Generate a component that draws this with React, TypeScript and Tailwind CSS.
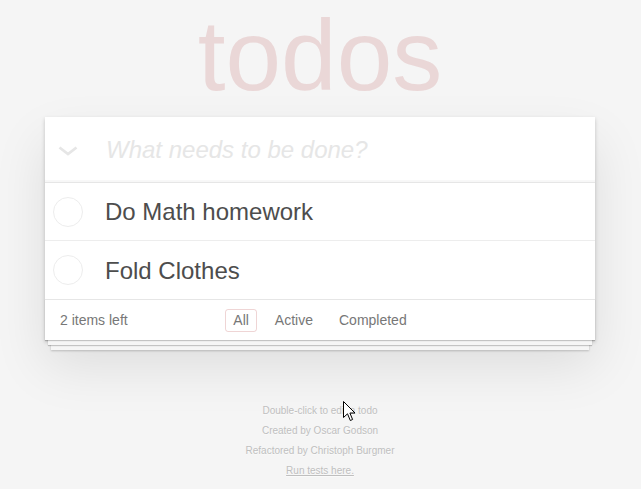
import { type FC } from "react";

const todos = [
  { id: 1, title: "Do Math homework" },
  { id: 2, title: "Fold Clothes" },
];

const Chevron: FC = () => (
  <svg width="20" height="10" viewBox="0 0 20 10" fill="none">
    <path d="M1.5 1.5 L10 8 L18.5 1.5" stroke="#e6e6e6" strokeWidth="2.8" />
  </svg>
);

const Cursor: FC = () => (
  <svg width="13" height="21" viewBox="0 0 13 21">
    <path
      d="M0.5 0.5 L0.5 16.5 L4.5 12.8 L7.3 19.5 L9.6 18.5 L6.9 12 L12 12 Z"
      fill="#fff"
      stroke="#000"
      strokeWidth="1"
      strokeLinejoin="miter"
    />
  </svg>
);

const TodoItem: FC<{ title: string }> = ({ title }) => (
  <li className="flex h-[58px] items-center border-b border-[#ededed] last:border-b-0">
    <span className="ml-[8px] h-[30px] w-[30px] rounded-full border border-[#ededed]" />
    <label className="ml-[22px] text-[24px] leading-[29px] text-[#4d4d4d]">
      {title}
    </label>
  </li>
);

export default function App() {
  return (
    <div className="relative min-h-screen bg-[#f5f5f5] font-['Liberation_Sans',Arial,sans-serif] text-[14px] text-[#4d4d4d]">
      <div className="ml-[45px] w-[550px]">
        <h1 className="pt-[5px] text-center text-[100px] font-thin leading-[100px] text-[rgba(175,47,47,0.15)]">
          todos
        </h1>

        <section className="mt-[12px] bg-white shadow-[0_2px_4px_0_rgba(0,0,0,0.2),0_25px_50px_0_rgba(0,0,0,0.1)]">
          <header className="relative flex h-[65px] items-center shadow-[inset_0_-2px_1px_rgba(0,0,0,0.03)]">
            <span className="ml-[13px] mt-[3px] flex w-[20px] justify-center">
              <Chevron />
            </span>
            <input
              className="ml-[28px] w-full bg-transparent pr-4 text-[24px] text-[#4d4d4d] outline-none placeholder:italic placeholder:text-[#e6e6e6]"
              placeholder="What needs to be done?"
            />
          </header>

          <ul className="border-t border-[#e6e6e6]">
            {todos.map((t) => (
              <TodoItem key={t.id} title={t.title} />
            ))}
          </ul>

          <footer className="grid h-[41px] grid-cols-[1fr_auto_1fr] items-center border-t border-[#e6e6e6] px-[15px] text-[14px] text-[#777] shadow-[0_1px_1px_rgba(0,0,0,0.2),0_8px_0_-3px_#f6f6f6,0_9px_1px_-3px_rgba(0,0,0,0.2),0_16px_0_-6px_#f6f6f6,0_17px_2px_-6px_rgba(0,0,0,0.2)]">
            <span>2 items left</span>
            <ul className="flex gap-[10px]">
              <li className="rounded-[3px] border border-[rgba(175,47,47,0.2)] px-[7px] py-[3px] leading-[15px]">
                All
              </li>
              <li className="rounded-[3px] border border-transparent px-[7px] py-[3px] leading-[15px]">
                Active
              </li>
              <li className="rounded-[3px] border border-transparent px-[7px] py-[3px] leading-[15px]">
                Completed
              </li>
            </ul>
            <span />
          </footer>
        </section>

        <div className="mt-[66px] flex flex-col items-center gap-[10px] pb-[10px] text-[10px] leading-[10px] text-[#bfbfbf] [text-shadow:0_1px_0_rgba(255,255,255,0.5)]">
          <p>Double-click to edit a todo</p>
          <p>Created by Oscar Godson</p>
          <p>Refactored by Christoph Burgmer</p>
          <p className="underline">Run tests here.</p>
        </div>
      </div>

      <div className="absolute left-[343px] top-[401px]">
        <Cursor />
      </div>
    </div>
  );
}
